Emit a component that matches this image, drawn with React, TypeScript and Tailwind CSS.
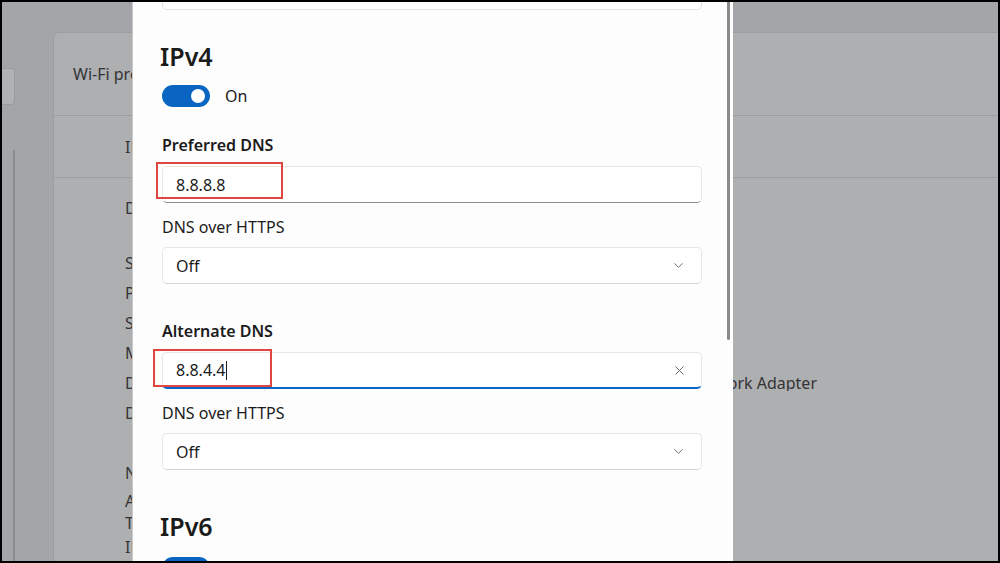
import React from "react";
import { ChevronDown, X } from "lucide-react";

const font = { fontFamily: '"Noto Sans", "Open Sans", Arial, sans-serif' };

function Toggle() {
  return (
    <div className="h-[22px] flex items-center gap-[15px]">
      <div className="w-[48px] h-[22px] rounded-full bg-[#0a64c2] flex items-center justify-end pr-[5px]">
        <div className="w-[14px] h-[14px] rounded-full bg-white" />
      </div>
      <span className="text-[16px] text-[#1b1b1b]">On</span>
    </div>
  );
}

function Label({ children, bold }: { children: React.ReactNode; bold?: boolean }) {
  return (
    <div
      className={`h-[24px] flex items-center text-[16px] text-[#1b1b1b] ${
        bold ? "font-semibold" : ""
      }`}
    >
      {children}
    </div>
  );
}

function TextBox({
  value,
  focused,
  mark,
}: {
  value: string;
  focused?: boolean;
  mark: { l: number; t: number; w: number; h: number };
}) {
  return (
    <div className="relative">
      <div
        className={`h-[37px] rounded-[5px] border border-[#e6e6e6] bg-white flex items-center pl-[13px] pr-[14px] ${
          focused ? "border-b-2 border-b-[#0a64c2]" : "border-b-[#8c8c8c]"
        }`}
      >
        <span className="text-[16px] text-[#1b1b1b]">{value}</span>
        {focused && <span className="w-px h-[19px] bg-[#1b1b1b] ml-[1px]" />}
        <span className="flex-1" />
        {focused && <X size={15} strokeWidth={1.4} className="text-[#5c5c5c]" />}
      </div>
      <div
        className="absolute border-2 border-[#e0463f]"
        style={{ left: mark.l, top: mark.t, width: mark.w, height: mark.h }}
      />
    </div>
  );
}

function Select() {
  return (
    <div className="h-[37px] rounded-[5px] border border-[#e6e6e6] border-b-[#d6d6d6] bg-white flex items-center pl-[13px] pr-[15px]">
      <span className="text-[16px] text-[#1b1b1b] flex-1">Off</span>
      <ChevronDown size={15} strokeWidth={1.4} className="text-[#5c5c5c]" />
    </div>
  );
}

function Background() {
  const rows = [
    "SSID:",
    "Protocol:",
    "Security type:",
    "Manufacturer:",
    "Description:",
    "Driver version:",
  ];
  return (
    <div className="absolute inset-0 flex bg-[#a3a5a8] text-[#333335]">
      {/* left nav strip */}
      <div className="w-[13px] flex flex-col">
        <div className="mt-[66px] h-[37px] w-[13px] rounded-r-[4px] border border-l-0 border-[#999b9d] bg-[#b0b1b3]" />
        <div className="flex-1 flex justify-end pt-[45px]">
          <div className="w-[2px] h-full bg-[#8a8b8d]" />
        </div>
      </div>
      <div className="w-[38px]" />
      {/* properties card */}
      <div className="flex-1 mt-[30px] rounded-tl-[6px] border-l border-t border-[#9c9d9f] bg-[#aeafb1] flex flex-col">
        <div className="h-[83px] shrink-0 border-b border-[#9c9d9f] flex items-center pl-[19px] text-[16px]">
          Wi-Fi properties
        </div>
        <div className="h-[62px] shrink-0 border-b border-[#9c9d9f] flex items-center pl-[71px] text-[16px]">
          IP assignment:
        </div>
        <div className="flex flex-col pl-[71px] text-[16px]">
          <div className="h-[60px] shrink-0 flex items-center">DNS server assignment:</div>
          <div className="h-[10px] shrink-0" />
          {rows.map((k, i) => (
            <div key={i} className="h-[30px] shrink-0 flex items-center leading-none">
              <span className="w-[492px] shrink-0">{k}</span>
              {i === 4 && (
                <span className="w-[200px] shrink-0 text-right whitespace-nowrap overflow-hidden">
                  Wireless Network Adapter
                </span>
              )}
            </div>
          ))}
          <div className="h-[30px] shrink-0" />
          <div className="h-[30px] shrink-0 flex items-center">Network band:</div>
          <div className="h-[26px] shrink-0 flex items-center">Authentication</div>
          <div className="h-[18px] shrink-0 flex items-center">Type:</div>
          <div className="h-[30px] shrink-0 flex items-center">IPv4 address:</div>
        </div>
      </div>
    </div>
  );
}

export default function App() {
  return (
    <div className="w-[1000px] h-[563px] bg-black p-[2px]" style={font}>
      <div className="relative w-[996px] h-[559px] overflow-hidden">
        <Background />

        {/* dialog */}
        <div className="absolute left-[130px] top-[-2px] w-[601px] h-[563px] overflow-hidden bg-[#fdfdfd] border-l border-[#c8c8c8] flex">
          <div className="flex-1 pl-[29px] pr-[24px]">
            <div className="h-[11px] mt-[-1px] rounded-b-[5px] border border-t-0 border-[#e2e2e2] bg-white" />
            <div className="mt-[31px] h-[32px] flex items-center text-[25px] font-semibold text-[#1b1b1b] ml-[-2px]">
              IPv4
            </div>
            <div className="mt-[12px]">
              <Toggle />
            </div>
            <div className="mt-[26px]">
              <Label bold>Preferred DNS</Label>
            </div>
            <div className="mt-[9px]">
              <TextBox value="8.8.8.8" mark={{ l: -6, t: -4, w: 127, h: 37 }} />
            </div>
            <div className="mt-[12px]">
              <Label>DNS over HTTPS</Label>
            </div>
            <div className="mt-[8px]">
              <Select />
            </div>
            <div className="mt-[35px]">
              <Label bold>Alternate DNS</Label>
            </div>
            <div className="mt-[9px]">
              <TextBox value="8.8.4.4" focused mark={{ l: -9, t: -3, w: 119, h: 38 }} />
            </div>
            <div className="mt-[12px]">
              <Label>DNS over HTTPS</Label>
            </div>
            <div className="mt-[8px]">
              <Select />
            </div>
            <div className="mt-[41px] h-[32px] flex items-center text-[25px] font-semibold text-[#1b1b1b] ml-[-2px]">
              IPv6
            </div>
            <div className="mt-[14px]">
              <Toggle />
            </div>
          </div>
          {/* scrollbar */}
          <div className="w-[7px] shrink-0 pl-px">
            <div className="w-[3px] h-[340px] rounded-full bg-[#8a8a8a]" />
          </div>
        </div>
      </div>
    </div>
  );
}
